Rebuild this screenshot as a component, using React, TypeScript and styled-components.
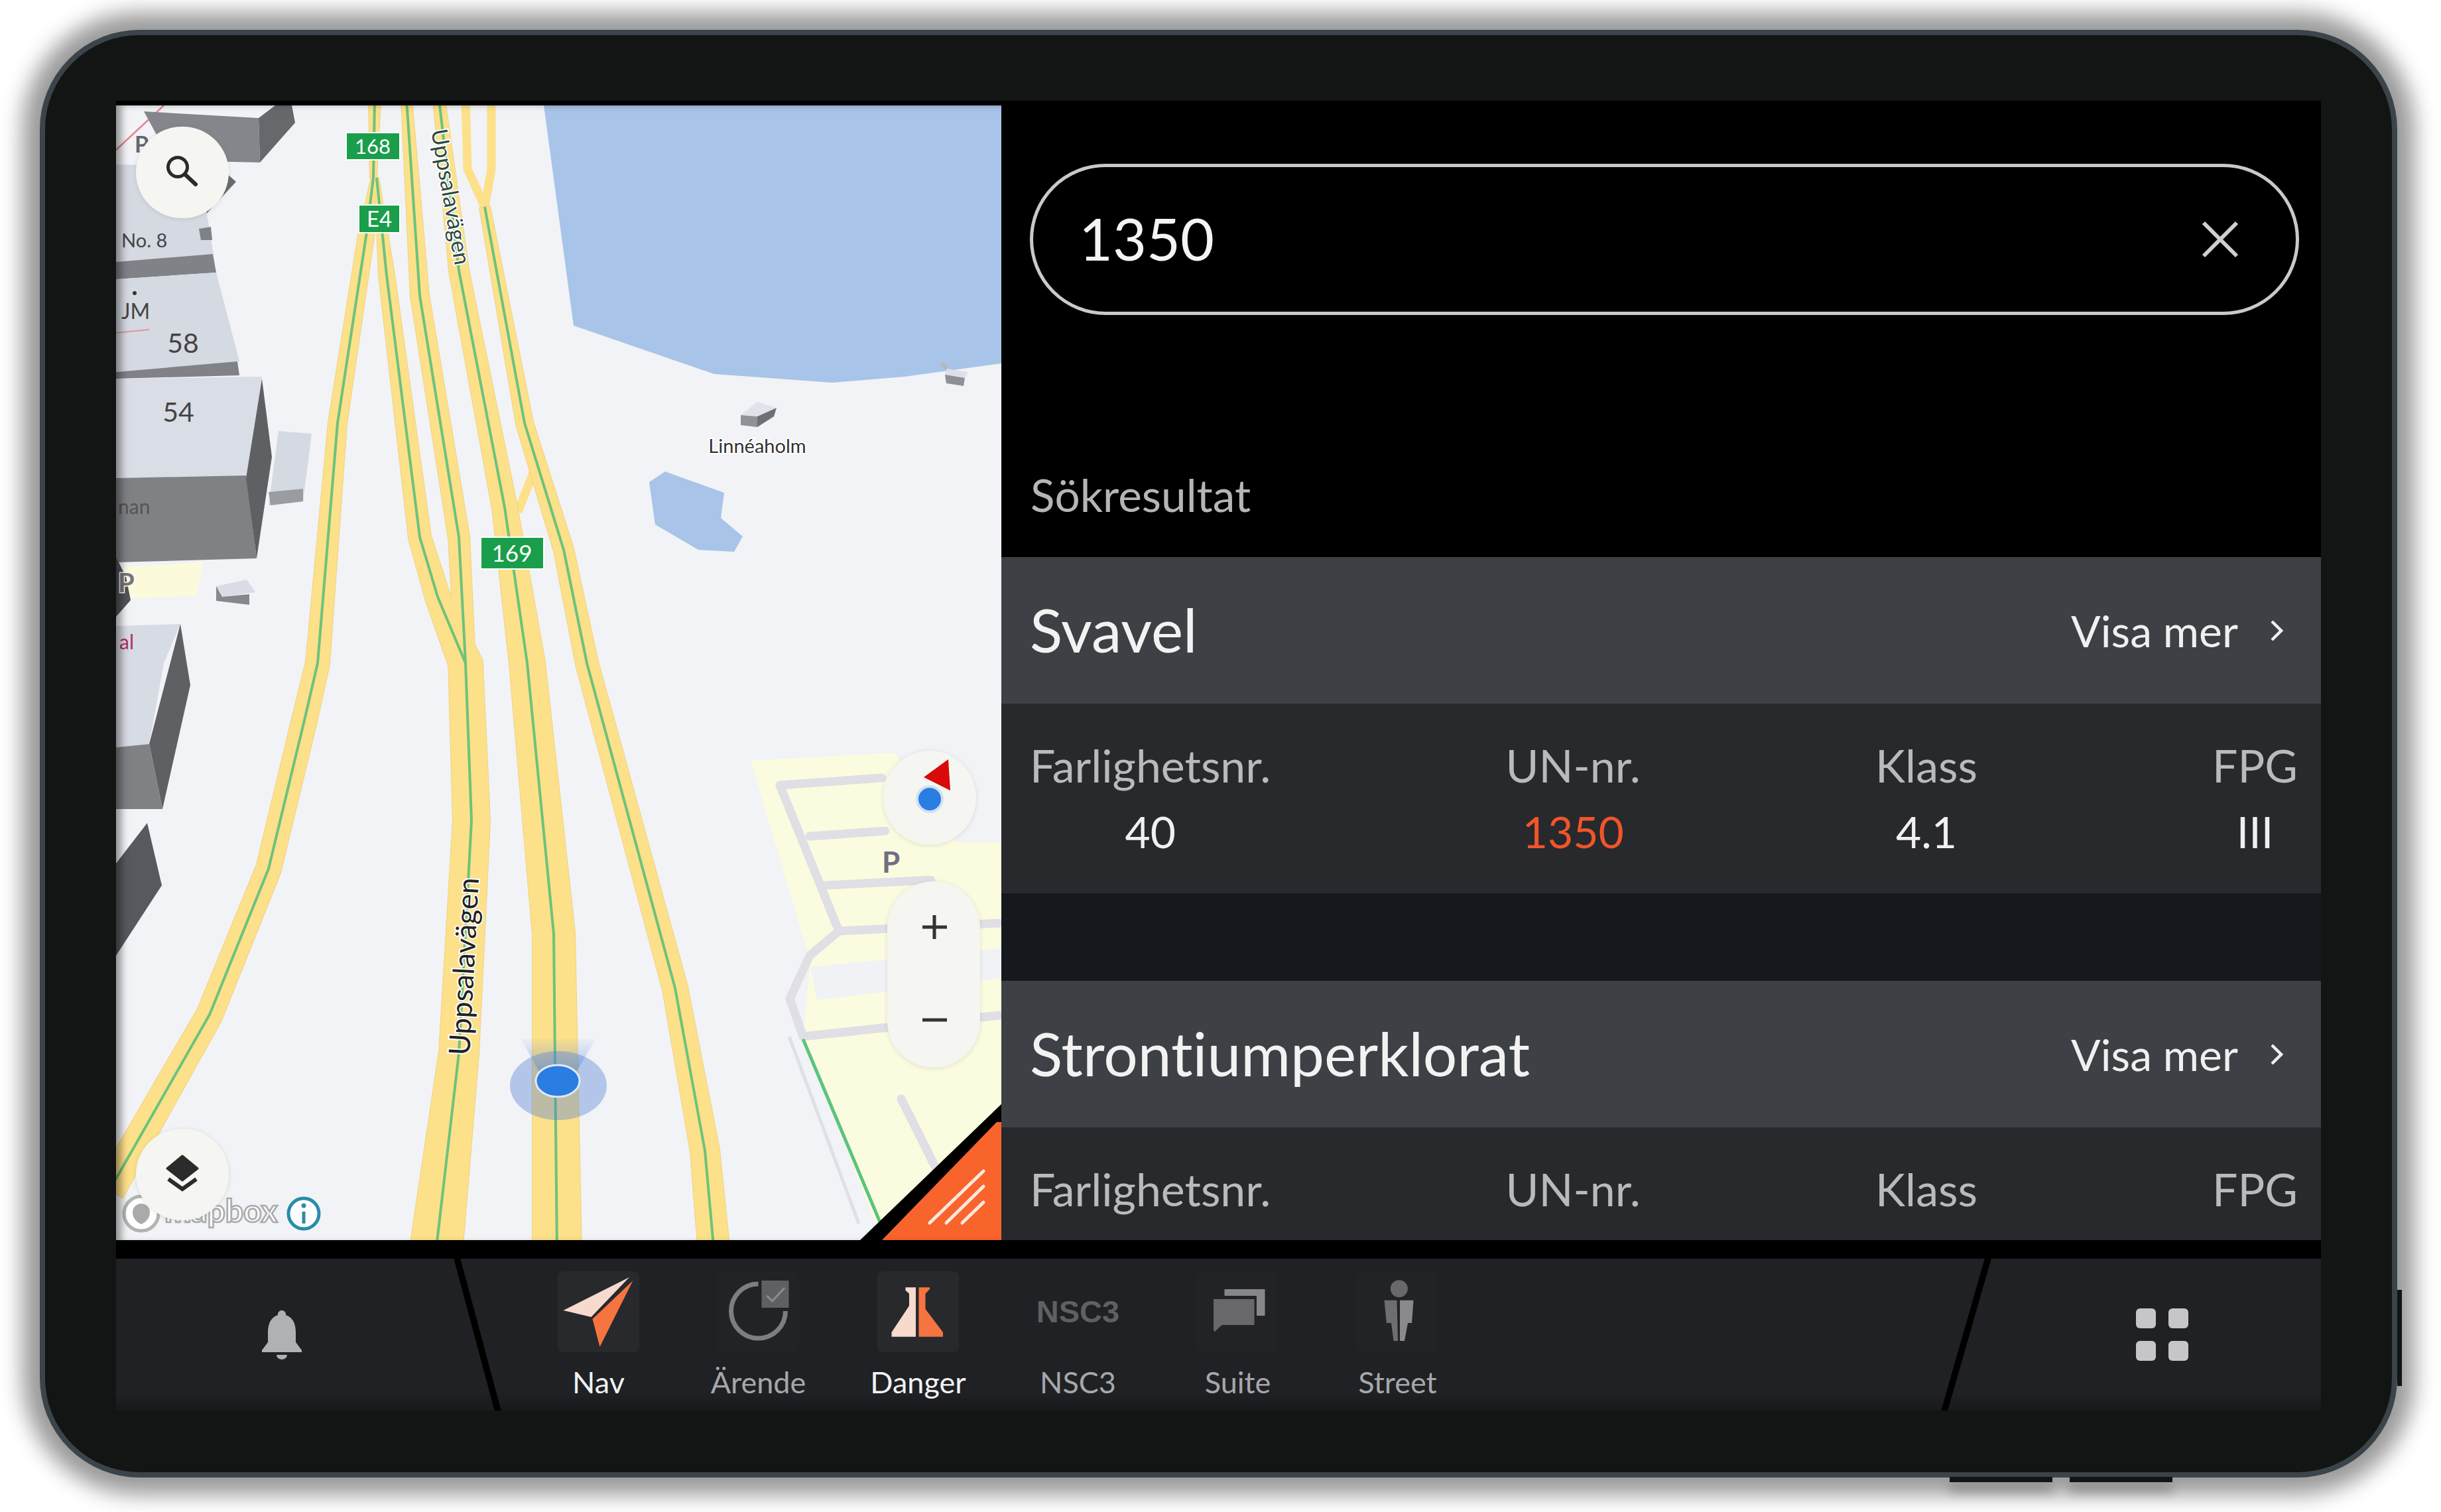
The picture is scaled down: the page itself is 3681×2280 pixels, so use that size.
import styled, { createGlobalStyle } from "styled-components";
import type { ReactNode } from "react";

const Global = createGlobalStyle`
  html, body {
    margin: 0;
    background: #fff;
    width: 3681px;
    height: 2280px;
    overflow: hidden;
    font-family: Lato, "Open Sans", sans-serif;
    font-variant-ligatures: none;
  }
`;

const Frame = styled.div`
  position: relative;
  box-sizing: border-box;
  width: 3555px;
  height: 2183px;
  margin: 45px 0 0 60px;
  padding: 99px 107px 93px;
  background: #131514;
  border: 8px solid #3a444a;
  border-radius: 150px;
  box-shadow: 0 0 32px 26px rgba(0, 0, 0, 0.4);
`;

const SideKey = styled.div`
  position: absolute;
  left: 3547px;
  top: 1892px;
  width: 7px;
  height: 145px;
  background: #131514;
`;

const BottomKey = styled.div<{ $left: number }>`
  position: absolute;
  left: ${(p) => p.$left}px;
  top: 2174px;
  width: 155px;
  height: 8px;
  background: #131514;
  box-shadow: 0 14px 16px rgba(0, 0, 0, 0.35);
`;

const Screen = styled.div`
  display: flex;
  flex-direction: column;
  height: 1975px;
  background: #000;
`;

const TopRow = styled.div`
  display: flex;
  height: 1718px;
  margin-bottom: 28px;
`;

const MapPane = styled.div`
  position: relative;
  flex: none;
  width: 1335px;
  height: 1711px;
  margin-top: 7px;
  overflow: hidden;
  background: #f1f3f6;
  svg.map {
    display: block;
    width: 100%;
    height: 100%;
  }
  &::after {
    content: "";
    position: absolute;
    inset: 0;
    pointer-events: none;
    box-shadow: inset 12px 2px 12px -4px rgba(0, 0, 0, 0.4);
  }
`;

const MapButton = styled.div<{ $left: number; $top: number; $h?: number }>`
  position: absolute;
  z-index: 2;
  left: ${(p) => p.$left}px;
  top: ${(p) => p.$top}px;
  width: 140px;
  height: ${(p) => p.$h ?? 138}px;
  border-radius: 70px;
  background: #f5f5f1;
  box-shadow: 0 1px 6px rgba(80, 80, 60, 0.16);
  svg {
    position: absolute;
    inset: 0;
    width: 100%;
    height: 100%;
  }
`;

const Panel = styled.section`
  flex: 1;
  min-width: 0;
  display: flex;
  flex-direction: column;
  overflow: hidden;
  background: #000;
`;

const SearchBox = styled.div`
  flex: none;
  box-sizing: border-box;
  display: flex;
  align-items: center;
  justify-content: space-between;
  width: 1914px;
  height: 228px;
  margin: 95px 0 0 43px;
  padding: 0 86px 4px 69px;
  border: 5px solid #c9c9c9;
  border-radius: 114px;
  color: #f4f4f4;
  font-size: 88px;
  svg {
    display: block;
    margin-top: 4px;
  }
`;

const ResultsTitle = styled.h2`
  flex: none;
  margin: 231px 0 54px 44px;
  color: #b5b5b5;
  font-size: 67.5px;
  font-weight: 400;
  line-height: 80px;
`;

const ResultList = styled.div`
  flex: 1;
  background: #15181c;
`;

const ResultHead = styled.div`
  display: flex;
  align-items: center;
  justify-content: space-between;
  height: 221px;
  padding: 0 57px 0 43px;
  background: #3d4044;
`;

const ResultName = styled.h3`
  margin: 0 0 4px;
  color: #f2f2f2;
  font-size: 91px;
  font-weight: 400;
`;

const ShowMore = styled.div`
  display: flex;
  align-items: center;
  gap: 48px;
  color: #f0f0f0;
  font-size: 66px;
`;

const ResultBody = styled.div`
  box-sizing: border-box;
  display: flex;
  justify-content: space-between;
  height: 286px;
  margin-bottom: 132px;
  padding: 53px 35px 0 43px;
  background: #27292d;
`;

const Fact = styled.div`
  display: flex;
  flex-direction: column;
  align-items: center;
  gap: 20px;
  line-height: 80px;
`;

const FactLabel = styled.span`
  color: #b9babc;
  font-size: 68px;
`;

const FactValue = styled.span<{ $hit?: boolean }>`
  color: ${(p) => (p.$hit ? "#f0552a" : "#f0f0f0")};
  font-size: 66px;
`;

const Dock = styled.nav`
  position: relative;
  display: flex;
  height: 229px;
  background: linear-gradient(#1f2125 88%, #18191c);
  overflow: hidden;
`;

const Slash = styled.i<{ $left: number; $skew: number }>`
  position: absolute;
  top: 0;
  left: ${(p) => p.$left}px;
  width: 10px;
  height: 100%;
  background: #000;
  transform: skewX(${(p) => p.$skew}deg);
`;

const BellCell = styled.div`
  flex: none;
  display: flex;
  align-items: center;
  justify-content: center;
  width: 500px;
  margin-right: 107px;
`;

const AppList = styled.div`
  display: flex;
`;

const AppItem = styled.div<{ $on?: boolean }>`
  width: 241px;
  padding-top: 19px;
  display: flex;
  flex-direction: column;
  align-items: center;
  color: ${(p) => (p.$on ? "#f2f2f2" : "#a6a7a9")};
  font-size: 45px;
  line-height: 52px;
`;

const AppTile = styled.div<{ $tone: "on" | "off" | "none" }>`
  display: flex;
  align-items: center;
  justify-content: center;
  width: 123px;
  height: 122px;
  margin-bottom: 19px;
  border-radius: 8px;
  background: ${(p) => (p.$tone === "on" ? "#27292d" : p.$tone === "off" ? "#212327" : "transparent")};
  svg {
    display: block;
    width: 123px;
    height: 122px;
  }
`;

const NscMark = styled.span`
  color: #5f6063;
  font-family: "Liberation Sans", sans-serif;
  font-size: 47px;
  font-weight: 700;
`;

const MenuCell = styled.div`
  margin-left: auto;
  flex: none;
  display: flex;
  align-items: center;
  justify-content: center;
  width: 480px;
`;

const MenuGrid = styled.div`
  display: grid;
  grid-template-columns: 30px 30px;
  grid-auto-rows: 30px;
  gap: 19px;
  span {
    border-radius: 6px;
    background: #c6c6c8;
  }
`;

// x, y, width at that point: the roads narrow towards the horizon
type RoadPoint = [number, number, number];

const roads: RoadPoint[][] = [
  [[565, 150, 18], [563, 268, 10]],
  [[563, 268, 6], [553, 350, 24], [509, 638, 28], [479, 1000, 36], [460, 1082, 38], [405, 1310, 38], [316, 1530, 40], [165, 1795, 46]],
  [[568, 268, 6], [583, 415, 24], [633, 810, 34], [660, 900, 38], [702, 1000, 52], [711, 1237, 56], [692, 1588, 60], [657, 1890, 80]],
  [[613, 150, 16], [633, 446, 28], [692, 810, 32], [702, 1000, 30]],
  [[662, 150, 18], [692, 408, 30], [761, 765, 38], [795, 1000, 54], [835, 1408, 64], [840, 1890, 74]],
  [[731, 312, 16], [791, 638, 26], [850, 829, 30], [885, 1000, 34], [1018, 1490, 38], [1063, 1735, 44], [1077, 1890, 48]],
];

const ribbon = (pts: RoadPoint[]) => {
  const left: string[] = [];
  const right: string[] = [];
  pts.forEach(([x, y, w], i) => {
    const a = pts[Math.max(i - 1, 0)];
    const b = pts[Math.min(i + 1, pts.length - 1)];
    const len = Math.hypot(b[0] - a[0], b[1] - a[1]);
    const nx = ((b[1] - a[1]) / len) * (w / 2);
    const ny = (-(b[0] - a[0]) / len) * (w / 2);
    left.push(`${(x + nx).toFixed(1)},${(y + ny).toFixed(1)}`);
    right.unshift(`${(x - nx).toFixed(1)},${(y - ny).toFixed(1)}`);
  });
  return [...left, ...right].join(" ");
};

const centre = (pts: RoadPoint[]) => pts.map(([x, y]) => `${x},${y}`).join(" ");

const thinRoads = ["M702 150 L705 255 L731 312", "M741 150 L741 255 L731 312", "M781 772 L806 708"];

const parkingLanes = [
  "M1330 1173 L1176 1184 L1265 1404 L1507 1392",
  "M1221 1261 L1335 1253",
  "M1246 1335 L1404 1327",
  "M1265 1404 L1221 1441 L1191 1506 L1211 1563 L1507 1531",
  "M1359 1657 L1414 1767",
];

const MapArt = () => (
  <svg className="map" viewBox="175 159 1335 1711">
    <defs>
      <linearGradient id="cone" x1="0" y1="0" x2="0" y2="1">
        <stop offset="0" stopColor="#6b96df" stopOpacity="0.05" />
        <stop offset="1" stopColor="#4f7fd6" stopOpacity="0.5" />
      </linearGradient>
    </defs>

    <polygon fill="#a8c4e8" points="820,159 865,491 1077,564 1255,577 1364,568 1510,548 1510,159" />
    <polygon fill="#a8c4e8" points="1003,711 1092,743 1087,781 1120,809 1107,832 1053,829 988,791 979,727" />

    <polygon fill="#fbfcdf" points="1132,1147 1349,1135 1442,1270 1510,1270 1510,1670 1325,1855 1211,1563 1222,1450" />
    <polygon fill="#f1f2f6" points="1222,1458 1510,1430 1510,1475 1232,1508" />
    <g fill="none" stroke="#dfdfe5" strokeWidth="13" strokeLinejoin="round" strokeLinecap="round">
      {parkingLanes.map((d) => (
        <path key={d} d={d} />
      ))}
    </g>
    <path d="M1190 1563 L1295 1845" fill="none" stroke="#dfdfe5" strokeWidth="5" />
    <path d="M1211 1567 L1330 1850" fill="none" stroke="#5cc47c" strokeWidth="5" />

    {/* buildings on the left edge */}
    <path d="M175 226 L247 159" fill="none" stroke="#e08890" strokeWidth="2.5" />
    <polygon fill="#85868b" points="217,168 390,178 392,245 257,242" />
    <polygon fill="#67686c" points="390,178 415,159 440,159 445,185 392,245" />
    <polygon fill="#6a6b70" points="341,261 356,274 306,328" />
    <polygon fill="#d5d9e2" points="175,248 300,250 322,383 175,395" />
    <polygon fill="#7f8187" points="300,345 318,342 320,362 303,362" />
    <polygon fill="#808288" points="175,395 321,383 326,411 175,421" />
    <polygon fill="#d5d9e2" points="175,421 326,411 361,545 175,561" />
    <polygon fill="#808288" points="175,561 358,545 361,566 175,571" />
    <polygon fill="#d9dde5" points="175,571 395,568 371,721 175,721" />
    <polygon fill="#808185" points="175,721 371,717 387,842 175,848" />
    <polygon fill="#5f6064" points="395,571 410,689 387,842 371,721" />
    <polygon fill="#d5d9e2" points="420,650 470,654 457,756 405,762" />
    <polygon fill="#9a9ca2" points="405,742 457,737 457,756 408,762" />
    <polygon fill="#fbfbdc" points="188,855 306,848 297,899 183,902" />
    <polygon fill="#53545a" points="175,840 190,870 197,905 175,930" />
    <polygon fill="#d9dce4" points="326,884 372,874 385,893 335,900" />
    <polygon fill="#85878c" points="326,884 335,900 376,896 376,912 326,906" />
    <polygon fill="#d7dbe3" points="175,944 272,941 247,1000 225,1122 175,1127" />
    <polygon fill="#5f6064" points="272,941 287,1033 245,1220 225,1122" />
    <polygon fill="#808185" points="175,1127 225,1122 245,1220 175,1220" />
    <polygon fill="#58595e" points="222,1241 244,1335 175,1441 175,1302" />

    {thinRoads.map((d) => (
      <path key={d} d={d} fill="none" stroke="#fde08a" strokeWidth="13" strokeLinejoin="round" />
    ))}
    {roads.map((r) => (
      <polygon key={r[0].join()} points={ribbon(r)} fill="#fde08a" stroke="#efd383" strokeWidth="2" strokeLinejoin="round" />
    ))}
    {roads.map((r) => (
      <polygon key={r[0].join()} points={ribbon(r)} fill="#fde08a" />
    ))}
    {roads.map((r) => (
      <polyline key={r[0].join()} points={centre(r)} fill="none" stroke="#6cc27c" strokeWidth="4" strokeLinejoin="round" />
    ))}

    {/* route shields */}
    <g fontFamily="Lato, sans-serif" fill="#fff" textAnchor="middle">
      <rect x="522" y="200" width="81" height="41" fill="#1a9e4b" stroke="#fff" strokeWidth="2" />
      <text x="562" y="232" fontSize="31">168</text>
      <rect x="541" y="309" width="62" height="42" fill="#1a9e4b" stroke="#fff" strokeWidth="2" />
      <text x="572" y="342" fontSize="33">E4</text>
      <rect x="725" y="810" width="95" height="48" fill="#1a9e4b" stroke="#fff" strokeWidth="2" />
      <text x="772" y="847" fontSize="35">169</text>
    </g>

    {/* map labels */}
    <g fontFamily="Lato, sans-serif" stroke="#fff" strokeWidth="4" paintOrder="stroke">
      <text transform="translate(650 197) rotate(80)" fontSize="34" fill="#2d4a44">Uppsalavägen</text>
      <text transform="translate(708 1592) rotate(-87)" fontSize="44" fill="#222">Uppsalavägen</text>
      <text x="1142" y="683" fontSize="29" fill="#333" textAnchor="middle">Linnéaholm</text>
    </g>
    <g fontFamily="Lato, sans-serif" fill="#444">
      <text x="183" y="373" fontSize="29">No. 8</text>
      <circle cx="203" cy="442" r="3" fill="#333" />
      <text x="183" y="481" fontSize="32">JM</text>
      <path d="M175 502 L225 497" stroke="#d99" strokeWidth="2" />
      <text x="276" y="532" fontSize="41" textAnchor="middle">58</text>
      <text x="269" y="636" fontSize="41" textAnchor="middle">54</text>
      <text x="178" y="775" fontSize="30" fill="#555">nan</text>
      <text x="180" y="979" fontSize="30" fill="#b03060">al</text>
      <text x="178" y="893" fontSize="40" fontWeight="700" fill="#777" stroke="#fff" strokeWidth="3" paintOrder="stroke">P</text>
      <text x="203" y="230" fontSize="34" fontWeight="700" fill="#65656d">P</text>
      <text x="1330" y="1316" fontSize="44" fontWeight="700" fill="#6f6f80">P</text>
    </g>

    {/* small houses */}
    <polygon fill="#e0e3ea" points="1117,626 1142,606 1171,615 1142,628" />
    <polygon fill="#6e7075" points="1142,628 1171,615 1167,628 1142,644" />
    <polygon fill="#909297" points="1117,626 1142,628 1142,644 1117,641" />
    <polygon fill="#dde0e6" points="1428,556 1460,561 1455,570 1425,565" />
    <polygon fill="#8e9095" points="1425,565 1455,570 1453,582 1427,578" />
    <path d="M1420 548 L1428 556" stroke="#b5b7bc" strokeWidth="6" />

    {/* own position */}
    <ellipse cx="842" cy="1637" rx="73" ry="52" fill="#4f7fd6" fillOpacity="0.38" />
    <polygon points="786,1567 898,1567 868,1618 814,1618" fill="url(#cone)" />
    <ellipse cx="841" cy="1630" rx="33" ry="24" fill="#2a7de1" stroke="#dfe8f5" strokeWidth="3" />

    {/* attribution */}
    <circle cx="213" cy="1830" r="26" fill="#fff" stroke="#b3b3b3" strokeWidth="5" />
    <path d="M213 1815 a13 13 0 0 1 13 13 q0 12 -13 18 q-13 -6 -13 -18 a13 13 0 0 1 13 -13z" fill="#aaa" />
    <text x="248" y="1843" fontFamily="Lato, sans-serif" fontSize="48" fontWeight="700" fill="#fff" stroke="#aaa" strokeWidth="2.5">mapbox</text>
    <circle cx="458" cy="1830" r="23" fill="#fff" stroke="#2a8ca8" strokeWidth="5" />
    <circle cx="458" cy="1818" r="3.5" fill="#2a8ca8" />
    <path d="M458 1827 V1845" stroke="#2a8ca8" strokeWidth="5" />

    {/* alert corner */}
    <polygon fill="#000" points="1297,1870 1510,1665 1510,1870" />
    <polygon fill="#f9642c" points="1330,1870 1503,1692 1510,1692 1510,1870" />
    <g stroke="#fde8dc" strokeWidth="5" strokeLinecap="round">
      <path d="M1402 1844 L1483 1766" />
      <path d="M1427 1844 L1483 1789" />
      <path d="M1451 1844 L1483 1813" />
    </g>
  </svg>
);

const SearchIcon = () => (
  <svg viewBox="0 0 140 138">
    <circle cx="63" cy="61" r="14.5" fill="none" stroke="#2b2b2b" strokeWidth="5" />
    <path d="M74 72 L90 87" stroke="#2b2b2b" strokeWidth="6" strokeLinecap="round" />
  </svg>
);

const LayersIcon = () => (
  <svg viewBox="0 0 140 138">
    <path d="M70 41 L93 60 L70 78 L47 60 Z" fill="#2b2b2b" strokeLinejoin="round" stroke="#2b2b2b" strokeWidth="3" />
    <path d="M49 76 L70 91 L91 76" fill="none" stroke="#2b2b2b" strokeWidth="6" />
  </svg>
);

const CompassIcon = () => (
  <svg viewBox="0 0 140 142">
    <polygon points="61,40 98,13 101,60" fill="#d90a0a" />
    <circle cx="70" cy="73" r="21" fill="#cfe0f4" />
    <circle cx="70" cy="73" r="17" fill="#2a7de1" />
  </svg>
);

const ZoomIcon = () => (
  <svg viewBox="0 0 140 281">
    <path d="M53 69 H90 M71 51 V87 M53 209 H90" stroke="#333" strokeWidth="5" />
  </svg>
);

const NavIcon = () => (
  <svg viewBox="0 0 123 122">
    <polygon points="8.5,59 108,9 50.5,69" fill="#f5dacd" />
    <polygon points="113.5,14 63.5,114 52.5,72" fill="#f6743f" />
  </svg>
);

const CaseIcon = () => (
  <svg viewBox="0 0 123 122">
    <path d="M61.5 19 A41 41 0 1 0 102.5 60" fill="none" stroke="#7c7e82" strokeWidth="7" />
    <rect x="66.5" y="14" width="41" height="41" fill="#5f6064" />
    <path d="M74.5 37 L82.5 45 L101 25" fill="none" stroke="#8d8d8d" strokeWidth="3" />
  </svg>
);

const FlaskIcon = () => (
  <svg viewBox="0 0 123 122">
    <polygon points="42.5,24.3 58,24.3 58,98.7 21.5,98.7 21.5,92 48,52 48,33.7 42.5,28.7" fill="#f5dacd" />
    <polygon points="62.5,24.3 79,24.3 79,27 72.5,33.7 72.5,57 99,92 99,98.7 62.5,98.7" fill="#f6743f" />
  </svg>
);

const SuiteIcon = () => (
  <svg viewBox="0 0 123 122">
    <polygon points="41.5,27 102.5,27 102.5,67 90,67 90,37 41.5,37" fill="#87878a" />
    <polygon points="25,42 86.5,42 86.5,81 37.5,81 27,91 25,89" fill="#68686b" />
  </svg>
);

const StreetIcon = () => (
  <svg viewBox="0 0 123 122">
    <circle cx="63.8" cy="26.3" r="13" fill="#68686b" />
    <polygon points="41.5,43.7 60.5,43.7 62,105 55.5,105 52,78 44.8,78" fill="#6e6e71" />
    <polygon points="65,43.7 85.5,43.7 83,78 77,78 72,105 65,105" fill="#8a8a8d" />
  </svg>
);

type DockApp = { name: string; on?: boolean; icon: ReactNode; bare?: boolean };

const apps: DockApp[] = [
  { name: "Nav", on: true, icon: <NavIcon /> },
  { name: "Ärende", icon: <CaseIcon /> },
  { name: "Danger", on: true, icon: <FlaskIcon /> },
  { name: "NSC3", icon: <NscMark>NSC3</NscMark>, bare: true },
  { name: "Suite", icon: <SuiteIcon /> },
  { name: "Street", icon: <StreetIcon /> },
];

const factNames = ["Farlighetsnr.", "UN-nr.", "Klass", "FPG"];

type Result = { name: string; values?: string[] };

const results: Result[] = [
  { name: "Svavel", values: ["40", "1350", "4.1", "III"] },
  { name: "Strontiumperklorat" },
];

const App = () => (
  <>
    <Global />
    <Frame>
      <SideKey />
      <BottomKey $left={2872} />
      <BottomKey $left={3053} />
      <Screen>
        <TopRow>
          <MapPane>
            <MapArt />
            <MapButton $left={30} $top={32}>
              <SearchIcon />
            </MapButton>
            <MapButton $left={30} $top={1543}>
              <LayersIcon />
            </MapButton>
            <MapButton $left={1157} $top={973} $h={142}>
              <CompassIcon />
            </MapButton>
            <MapButton $left={1163} $top={1170} $h={281}>
              <ZoomIcon />
            </MapButton>
          </MapPane>
          <Panel>
            <SearchBox>
              1350
              <svg width="56" height="56" viewBox="0 0 56 56">
                <path d="M3 3 L53 53 M53 3 L3 53" stroke="#cfcfcf" strokeWidth="6" />
              </svg>
            </SearchBox>
            <ResultsTitle>Sökresultat</ResultsTitle>
            <ResultList>
              {results.map((r) => (
                <div key={r.name}>
                  <ResultHead>
                    <ResultName>{r.name}</ResultName>
                    <ShowMore>
                      Visa mer
                      <svg width="20" height="34" viewBox="0 0 20 34">
                        <path d="M3 3 L17 17 L3 31" fill="none" stroke="#f0f0f0" strokeWidth="4.5" />
                      </svg>
                    </ShowMore>
                  </ResultHead>
                  <ResultBody>
                    {factNames.map((label, i) => (
                      <Fact key={label}>
                        <FactLabel>{label}</FactLabel>
                        {r.values && <FactValue $hit={i === 1}>{r.values[i]}</FactValue>}
                      </Fact>
                    ))}
                  </ResultBody>
                </div>
              ))}
            </ResultList>
          </Panel>
        </TopRow>
        <Dock>
          <Slash $left={540} $skew={15} />
          <Slash $left={2785} $skew={-16} />
          <BellCell>
            <svg width="60" height="74" viewBox="0 0 60 74">
              <path
                d="M30 0 a6 6 0 0 1 6 7 C48 11 51 22 51 34 V48 L60 60 V63 H0 V60 L9 48 V34 C9 22 12 11 24 7 a6 6 0 0 1 6 -7 Z"
                fill="#b0b1b3"
              />
              <path d="M22 67 H38 a8 7 0 0 1 -16 0 Z" fill="#b0b1b3" />
            </svg>
          </BellCell>
          <AppList>
            {apps.map((a) => (
              <AppItem key={a.name} $on={a.on}>
                <AppTile $tone={a.bare ? "none" : a.on ? "on" : "off"}>{a.icon}</AppTile>
                {a.name}
              </AppItem>
            ))}
          </AppList>
          <MenuCell>
            <MenuGrid>
              <span />
              <span />
              <span />
              <span />
            </MenuGrid>
          </MenuCell>
        </Dock>
      </Screen>
    </Frame>
  </>
);

export default App;
